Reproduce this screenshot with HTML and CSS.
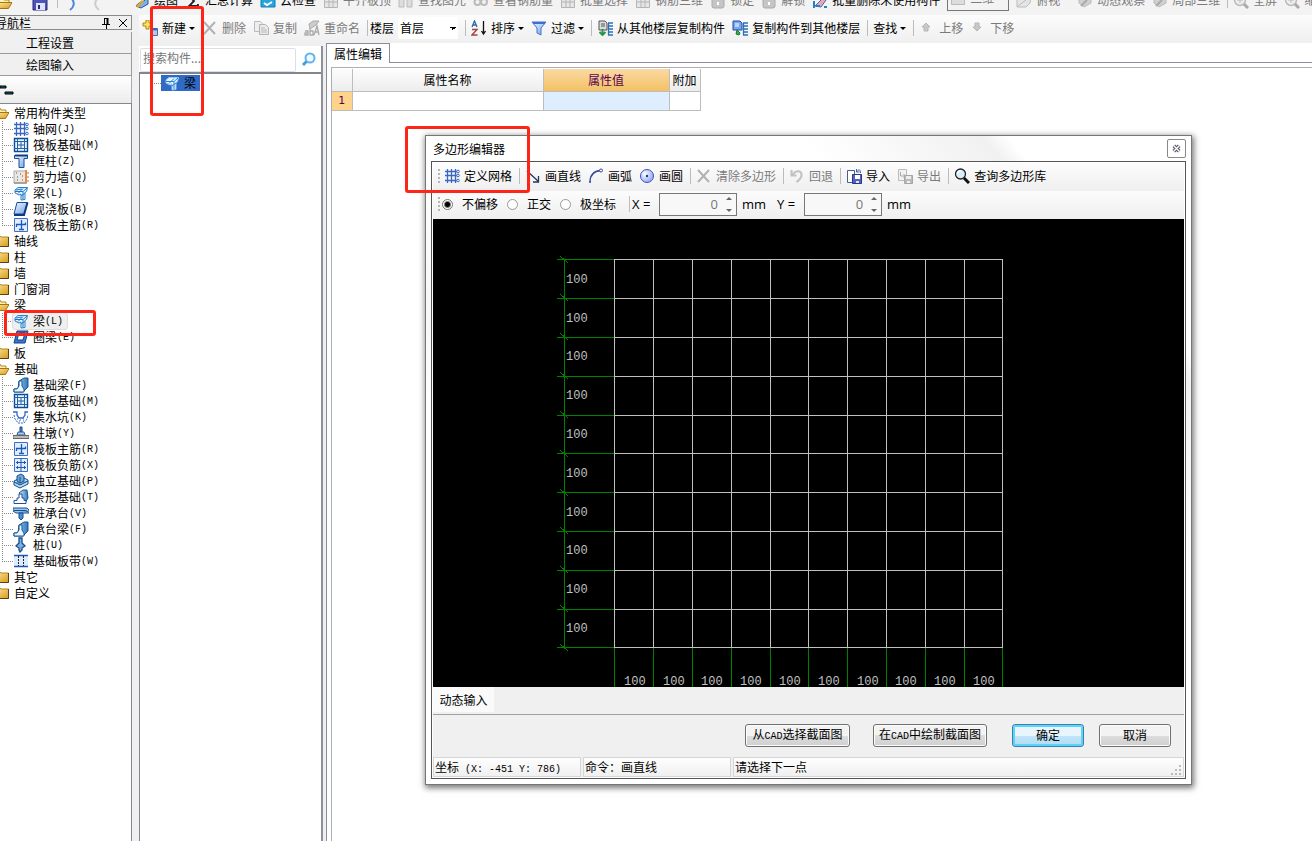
FILE: index.html
```html
<!DOCTYPE html>
<html lang="zh-CN">
<head>
<meta charset="utf-8">
<title>多边形编辑器</title>
<link rel="stylesheet" href="styles.css">
</head>
<body>
<svg class="defs" aria-hidden="true">
  <defs>
    <linearGradient id="gold" x1="0" y1="0" x2="1" y2="1"><stop offset="0" stop-color="#ffe9a0"/><stop offset="1" stop-color="#d59b1c"/></linearGradient>
    <linearGradient id="blue" x1="0" y1="0" x2="1" y2="1"><stop offset="0" stop-color="#f2f8ff"/><stop offset="1" stop-color="#6f9fe8"/></linearGradient>
    <linearGradient id="steel" x1="0" y1="0" x2="1" y2="0"><stop offset="0" stop-color="#d8ecfb"/><stop offset="1" stop-color="#2d77bd"/></linearGradient>
    <radialGradient id="ball" cx=".35" cy=".35" r=".8"><stop offset="0" stop-color="#fff"/><stop offset="1" stop-color="#7f9bf5"/></radialGradient>
  </defs>
  <symbol id="folder" viewBox="0 0 16 16"><path d="M1 3h6l1 1h7.500v9.500H1z" fill="url(#gold)" stroke="#b8841c"/><path d="M1 13.500h14.500V4" fill="none" stroke="#5d4210"/></symbol>
  <symbol id="open" viewBox="0 0 16 16"><path d="M1 3h6l1 2h5v3H1z" fill="#fff0b5" stroke="#b98518"/><path d="M1 13.500L4 7.500h12l-3.500 6z" fill="url(#gold)" stroke="#a87410"/></symbol>
  <symbol id="grid" viewBox="0 0 16 16"><path d="M3.500 1v14M7.500 1v14M11.500 1v14M1 3.500h12M1 7.500h12M1 12.500h12" stroke="#3a68c0" stroke-width="1.300"/><g fill="#fff" stroke="#3a68c0"><circle cx="14" cy="3.500" r="1.300"/><circle cx="14" cy="7.500" r="1.300"/><circle cx="14" cy="12.500" r="1.300"/></g></symbol>
  <symbol id="raft" viewBox="0 0 16 16"><path d="M1.500 1.500h13v13h-13z" fill="#eaf3ff" stroke="#0d4c91" stroke-width="1.400"/><path d="M4.500 1v13M11.500 1v13M1 4.500h13M1 11.500h13M8 5v6M5 8h6" stroke="#1e62aa"/></symbol>
  <symbol id="column" viewBox="0 0 16 16"><path d="M1.500 2.500h13v3h-3.500V14.500H6V5.500H1.500z" fill="url(#blue)" stroke="#174c9c"/><path d="M2 2.500h13" stroke="#123c80" stroke-width="2"/></symbol>
  <symbol id="wall" viewBox="0 0 16 16"><path d="M1 2h12v12H1z" fill="#ece7e2" stroke="#aaa"/><path d="M1 14h13" stroke="#777"/><path d="M3 4h1m3 1h1m-4 3h1m4-1h1m-6 4h1m4 0h1m2-6h1m0 5h1" stroke="#555"/><path d="M13 1v13" stroke="#e6894a" stroke-width="2"/><path d="M14 4h2M14 8h2M14 12h2" stroke="#d06d29"/></symbol>
  <symbol id="beam" viewBox="0 0 16 16"><path d="M2 5l3-2.500h9.500l-1 4-1.500 1v7l-4 .5V9L6 10 2 8z" fill="#e4f3ff" stroke="#2484cf"/><path d="M2 6.500h8l4-3.500M5 8.500l5-5M10 7v7.500M8 11l4-3M3 5l6-1" fill="none" stroke="#1f78c4"/></symbol>
  <symbol id="slab" viewBox="0 0 16 16"><path d="M4 1.500h10.500L11 13H1z" fill="url(#blue)" stroke="#174c9c"/><path d="M1 14h10l3.500-12.500" fill="none" stroke="#0e3a80" stroke-width="2"/></symbol>
  <symbol id="rebar" viewBox="0 0 16 16"><path d="M1.500 1.500h13v13h-13z" fill="#e2eeff" stroke="#3b6fca"/><path d="M8.500 3v10M3.500 10V7.500h9V5.500M6 12.500h5" fill="none" stroke="#1f57b4" stroke-width="1.300"/></symbol>
  <symbol id="negbar" viewBox="0 0 16 16"><path d="M1.500 1.500h13v13h-13z" fill="#e2eeff" stroke="#3b6fca"/><path d="M8 1v13M3 5.500h10M3 10.500h10M4.500 4v3m7-3v3M4.500 9v3m7-3v3" stroke="#1f57b4"/></symbol>
  <symbol id="ring" viewBox="0 0 16 16"><path d="M4 2h11l-3 12H1z" fill="#3b79cf" stroke="#123f85"/><path d="M6 4h6l-2 7H4z" fill="#fff" stroke="#123f85"/></symbol>
  <symbol id="fbeam" viewBox="0 0 16 16"><path d="M6 4l5-3h4v9l-5 5H1v-3h4z" fill="url(#steel)" stroke="#17568f"/><path d="M1 12h3l2-3V4h3v5l2 3v3H1z" fill="#e8f4ff" stroke="#17568f"/></symbol>
  <symbol id="strip" viewBox="0 0 16 16"><path d="M6 4l4-3h4l1 8-3 5z" fill="url(#steel)" stroke="#17568f"/><path d="M1 14.500v-3h3V9h2V5h3v4h2v2.500h2v3z" fill="#fff" stroke="#1f4f9f"/></symbol>
  <symbol id="pit" viewBox="0 0 16 16"><path d="M0 3h4v3l2 3h4l2-3V3h3" fill="none" stroke="#2f69c8" stroke-width="1.300"/><path d="M1 6l1 4 3 4h6l3-4 1-4" fill="none" stroke="#2f69c8" stroke-dasharray="2 1"/><path d="M4 10h1m2 1h1m2-1h1m-5 2h1m3 0h1" stroke="#2f69c8"/></symbol>
  <symbol id="pier" viewBox="0 0 16 16"><path d="M7 2h2v5H7z" fill="#5b90d8" stroke="#173f80"/><path d="M5 7h6l1 3H4z" fill="#a9c9ee" stroke="#315f9f"/><path d="M0 10.500h16v3H0z" fill="#bbb" stroke="#666"/></symbol>
  <symbol id="iso" viewBox="0 0 16 16"><path d="M1 8l8-4 6 3v4l-8 4-6-3z" fill="#b9dbf5" stroke="#154d8a"/><path d="M4 3l4-2 3 2v5l-4 2-3-2zM7 4v6M1 9l6 3 8-4" fill="#6fa9da" stroke="#154d8a"/></symbol>
  <symbol id="cap" viewBox="0 0 16 16"><path d="M0 3h14l2 2v3H3L0 6z" fill="#9cc8f0" stroke="#164f90"/><path d="M1 5.500h12l2 1.500M6 8v5l2 2 2-2V8z" fill="#4c8dd0" stroke="#164f90"/></symbol>
  <symbol id="pile" viewBox="0 0 16 16"><path d="M6 1h3v5l3 3-3 2v2l-2 2-1-2v-2L3 9l3-3z" fill="#79aee5" stroke="#1b4c8c" stroke-width="1.300"/></symbol>
  <symbol id="band" viewBox="0 0 16 16"><path d="M1 3h14v10H1z" fill="#dcecff"/><path d="M1 2.500h14M1 13.500h14" stroke="#1f57b4" stroke-width="1.500"/><path d="M5.500 3v10M10.500 3v10" stroke="#222" stroke-dasharray="2 1"/></symbol>
  <symbol id="new" viewBox="0 0 16 16"><path d="M4 0h3v3h3v3H7v3H4V6H1V3h3z" fill="#ffe45a" stroke="#aa8610"/><path d="M9.500 8.500h6v7h-6z" fill="#dceaff" stroke="#4b6ea8"/><path d="M10 9.500h5" stroke="#2c65c9" stroke-width="2"/><path d="M11 12h4m-4 2h4" stroke="#89a7d4"/></symbol>
  <symbol id="cross" viewBox="0 0 16 16"><path d="M2 2l11 12M13 2L2 14" stroke="#b2b2b2" stroke-width="2"/></symbol>
  <symbol id="copy" viewBox="0 0 16 16"><path d="M1.500 1.500h6l2 2v8h-8z" fill="#eee" stroke="#bbb"/><path d="M6.500 4.500h6l3 3v7h-9z" fill="#e9e9e9" stroke="#b3b3b3"/><path d="M8 8h4m-4 2h6m-6 2h6" stroke="#bbb"/></symbol>
  <symbol id="rename" viewBox="0 0 16 16"><path d="M5 4l4-3h6l-3 4-6 4z" fill="#ccc" stroke="#aaa"/><path d="M1 11h3v4H1v-2h3M6 9v6h3v-4H6M10 15l3-9 2 9m-4-3h4" fill="none" stroke="#aaa" stroke-width="1.300"/></symbol>
  <symbol id="sort" viewBox="0 0 16 16"><path d="M1 7l2.500-6L6 7M2 5h3" fill="none" stroke="#2d66a5" stroke-width="1.300"/><path d="M1 9.500h5L1 15h5.500" fill="none" stroke="#a04343" stroke-width="1.400"/><path d="M12.500 1v13M10.500 11l2 3 2-3" fill="none" stroke="#111" stroke-width="1.300"/></symbol>
  <symbol id="filter" viewBox="0 0 16 16"><path d="M1 2h14l-5 6v7l-4-2V8z" fill="url(#blue)" stroke="#3f74d0"/><path d="M2 3h12" stroke="#3f6fd4" stroke-width="2"/></symbol>
  <symbol id="fromfloor" viewBox="0 0 16 16"><path d="M2 1h6l2 2v7H2z" fill="#ddd" stroke="#555"/><path d="M4 4h4M4 6h4" stroke="#555"/><path d="M5.500 9v5m-3-2l3 3 3-3" fill="none" stroke="#28974b" stroke-width="2"/><path d="M11 3h5M11 6h5M11 9h5M11 12h5M11 15h5M11.500 3v12" fill="none" stroke="#2c70b5" stroke-width="1.300"/></symbol>
  <symbol id="tofloor" viewBox="0 0 16 16"><path d="M1 1h7l2 2v7H1z" fill="#79a5ee" stroke="#2448a5"/><path d="M3 4h4M3 6h4" stroke="#fff"/><path d="M4 14l1-4 3 3-1 2z" fill="#31b54c" stroke="#167432"/><path d="M11 3h5M11 6h5M11 9h5M11 12h5M11 15h5M11.500 3v12" fill="none" stroke="#2c70b5" stroke-width="1.300"/></symbol>
  <symbol id="up" viewBox="0 0 16 16"><path d="M7 3l4 4H9v4H5V7H3z" fill="#c8c8c8" stroke="#b5b5b5"/></symbol>
  <symbol id="down" viewBox="0 0 16 16"><path d="M5 3h4v4h2l-4 4-4-4h2z" fill="#c8c8c8" stroke="#b5b5b5"/></symbol>
  <symbol id="glass" viewBox="0 0 16 16"><circle cx="9" cy="6" r="4.500" fill="#eef8ff" stroke="#62b4e8" stroke-width="2"/><path d="M5.500 9.500L2 13" stroke="#4a9bd6" stroke-width="3"/></symbol>
  <symbol id="line" viewBox="0 0 16 16"><path d="M2 3l11 10M13.500 8v6H8" fill="none" stroke="#24365e" stroke-width="1.300"/></symbol>
  <symbol id="arc" viewBox="0 0 16 16"><path d="M2 14C2 7 6 3 13 2.500" fill="none" stroke="#3a459c" stroke-width="1.300"/><circle cx="13" cy="2.500" r="1.500" fill="#fff" stroke="#3a459c"/><circle cx="2" cy="14" r="1" fill="#3a459c"/></symbol>
  <symbol id="circle" viewBox="0 0 16 16"><circle cx="8" cy="8" r="6.500" fill="url(#ball)" stroke="#3d55bf"/><circle cx="8" cy="8" r="1.200" fill="#26388e"/></symbol>
  <symbol id="undo" viewBox="0 0 16 16"><path d="M2.500 2v5.500h5M3.500 7c3-5 9-5 9 0 0 3-2 5-5 7" fill="none" stroke="#c3c3c3" stroke-width="2.200"/></symbol>
  <symbol id="import" viewBox="0 0 16 16"><path d="M1.500 2.500h7v12h-7z" fill="#fff" stroke="#4a5d96"/><path d="M6.500 6.500h9v9h-9z" fill="#5261c4" stroke="#29357f"/><path d="M9 7h5v4H9z" fill="#fff"/><path d="M10 13h3v2h-3z" fill="#dfe3f8"/><path d="M10.500 4c2-3 4-3 4 1m-4-4v3h3" fill="none" stroke="#3f65a8"/></symbol>
  <symbol id="export" viewBox="0 0 16 16"><path d="M1.500 1.500h8v11h-8z" fill="#f2f2f2" stroke="#bbb"/><path d="M7.500 7.500h8v8h-8z" fill="#bbb" stroke="#a5a5a5"/><path d="M9 8h5v3H9zM10 13h3v2h-3z" fill="#eee"/><path d="M3.500 4v4h5M6.500 6l2 2-2 2" fill="none" stroke="#aaa"/></symbol>
  <symbol id="query" viewBox="0 0 16 16"><circle cx="6.500" cy="6" r="5" fill="#d7effc" stroke="#222" stroke-width="1.300"/><path d="M10 10l5 5" stroke="#111" stroke-width="3"/><path d="M3.500 6c0-2 1-3 3-3" fill="none" stroke="#fff" stroke-width="1.500"/></symbol>
  <symbol id="save" viewBox="0 0 16 16"><path d="M1 1h14v14H1z" fill="#4b55ba" stroke="#262c78"/><path d="M4 8h9v7H4z" fill="#dfe2f4"/><path d="M6 10h2v4H6z" fill="#262c78"/></symbol>
  <symbol id="draw" viewBox="0 0 16 16"><path d="M2 13c4-6 8-2 12-10v8l-7 4z" fill="#78b3e6" stroke="#30539b"/><path d="M3 14l6-6" stroke="#d3a640" stroke-width="3"/></symbol>
  <symbol id="sum" viewBox="0 0 16 16"><path d="M13 3H4l5 5-5 5h9v-2" fill="none" stroke="#222" stroke-width="1.800"/></symbol>
  <symbol id="cloud" viewBox="0 0 16 16"><path d="M1 2h14v12H1z" fill="#26a4dc" stroke="#127fb2"/><path d="M4 10l3 2 5-3" stroke="#fff" fill="none" stroke-width="2"/></symbol>
  <symbol id="sheet" viewBox="0 0 16 16"><path d="M1.500 2.500h13v12h-13zM6 2v12m4-12v12M1 9h13" fill="#e6e6e6" stroke="#b5b5b5"/></symbol>
  <symbol id="bins" viewBox="0 0 16 16"><path d="M1 5h5v9H1zM9 5h5v9H9z" fill="#ddd" stroke="#bbb"/></symbol>
  <symbol id="loops" viewBox="0 0 16 16"><circle cx="4.500" cy="9" r="3" fill="none" stroke="#bbb" stroke-width="2"/><circle cx="11" cy="9" r="3" fill="none" stroke="#bbb" stroke-width="2"/></symbol>
  <symbol id="lock" viewBox="0 0 16 16"><rect x="2" y="5" width="12" height="10" rx="2" fill="#c5c5c5" stroke="#aaa"/><path d="M8 9v3" stroke="#fff" stroke-width="2"/></symbol>
  <symbol id="plane" viewBox="0 0 16 16"><path d="M1.500 3.500h13v10h-13z" fill="#ddd" stroke="#bbb"/></symbol>
  <symbol id="purge" viewBox="0 0 16 16"><path d="M3 13l8-8 3 2-5 7z" fill="#f1a3b4" stroke="#2977b2"/><path d="M2 8v7m2-2h4m4 1h3" stroke="#2d7bc4" stroke-width="2"/></symbol>
  <symbol id="box" viewBox="0 0 16 16"><path d="M1 7l4-4h10l-1 7-4 4H1z" fill="#e5e5e5" stroke="#bbb"/><path d="M2 13l12-9" stroke="#bbb"/></symbol>
  <symbol id="orbit" viewBox="0 0 16 16"><path d="M2 5h12v5l-7 4-5-4z" fill="#d0d0d0" stroke="#bbb"/><path d="M4 13l6-6" stroke="#aaa" stroke-width="2"/></symbol>
  <symbol id="zoom" viewBox="0 0 16 16"><circle cx="7" cy="7" r="5.500" fill="#eee" stroke="#bbb" stroke-width="1.500"/><path d="M11 11l4 4" stroke="#aaa" stroke-width="3"/><path d="M7 4v6M4 7h6" stroke="#bbb"/></symbol>
</svg>

<div class="topbar">
  <div class="file-tools">
    <svg class="icon file-open"><use href="#open"/></svg>
    <svg class="icon"><use href="#save"/></svg>
    <i class="sep"></i>
    <svg class="icon" viewBox="0 0 16 16"><path d="M5 15c4-3 5-7 2-11" fill="none" stroke="#4f86d8" stroke-width="2"/></svg>
    <svg class="icon" viewBox="0 0 16 16"><path d="M9 15C5 12 4 8 7 4" fill="none" stroke="#ccc" stroke-width="2"/></svg>
  </div>
  <button class="tool"><svg class="icon"><use href="#draw"/></svg>绘图</button>
  <button class="tool"><svg class="icon"><use href="#sum"/></svg>汇总计算</button>
  <button class="tool"><svg class="icon"><use href="#cloud"/></svg>云检查</button>
  <button class="tool off"><svg class="icon"><use href="#sheet"/></svg>平齐板顶</button>
  <button class="tool off"><svg class="icon"><use href="#bins"/></svg>查找图元</button>
  <button class="tool off"><svg class="icon"><use href="#loops"/></svg>查看钢筋量</button>
  <button class="tool off"><svg class="icon"><use href="#sheet"/></svg>批量选择</button>
  <button class="tool off"><svg class="icon"><use href="#sheet"/></svg>钢筋三维</button>
  <button class="tool off"><svg class="icon"><use href="#lock"/></svg>锁定</button>
  <button class="tool off"><svg class="icon"><use href="#lock"/></svg>解锁</button>
  <button class="tool"><svg class="icon"><use href="#purge"/></svg>批量删除未使用构件</button>
  <button class="tool off view-mode"><svg class="icon"><use href="#plane"/></svg>二维</button>
  <button class="tool off spaced"><svg class="icon"><use href="#box"/></svg>俯视</button>
  <button class="tool off"><svg class="icon"><use href="#orbit"/></svg>动态观察</button>
  <button class="tool off"><svg class="icon"><use href="#orbit"/></svg>局部三维</button>
  <i class="sep"></i>
  <button class="tool off"><svg class="icon"><use href="#zoom"/></svg>全屏</button>
  <button class="tool off"><svg class="icon"><use href="#zoom"/></svg>缩放</button>
</div>

<div class="workspace">
  <aside class="nav">
    <div class="nav-title"><span>导航栏</span>
      <svg class="pin" viewBox="0 0 10 12"><path d="M3.500 1v6M3 1.500h4M1 7.500h8M5.500 8v4" fill="none" stroke="#000"/><path d="M6.500 1v6" stroke="#000" stroke-width="2"/></svg>
      <svg class="pin" viewBox="0 0 10 12"><path d="M1 2l8 8M9 2l-8 8" stroke="#000"/></svg>
    </div>
    <button class="nav-button">工程设置</button>
    <button class="nav-button">绘图输入</button>
    <div class="nav-tools"><svg class="levels" viewBox="0 0 14 10"><path d="M0 1h6v2H0zM5 7h8v2H5z" fill="#0d6670" stroke="#000"/></svg></div>
    <ul class="tree">
      <li class="root"><svg class="icon"><use href="#open"/></svg>常用构件类型</li>
      <li class="leaf"><svg class="icon"><use href="#grid"/></svg>轴网<span class="mono">(J)</span></li>
      <li class="leaf"><svg class="icon"><use href="#raft"/></svg>筏板基础<span class="mono">(M)</span></li>
      <li class="leaf"><svg class="icon"><use href="#column"/></svg>框柱<span class="mono">(Z)</span></li>
      <li class="leaf"><svg class="icon"><use href="#wall"/></svg>剪力墙<span class="mono">(Q)</span></li>
      <li class="leaf"><svg class="icon"><use href="#beam"/></svg>梁<span class="mono">(L)</span></li>
      <li class="leaf"><svg class="icon"><use href="#slab"/></svg>现浇板<span class="mono">(B)</span></li>
      <li class="leaf last"><svg class="icon"><use href="#rebar"/></svg>筏板主筋<span class="mono">(R)</span></li>
      <li class="root"><svg class="icon"><use href="#folder"/></svg>轴线</li>
      <li class="root"><svg class="icon"><use href="#folder"/></svg>柱</li>
      <li class="root"><svg class="icon"><use href="#folder"/></svg>墙</li>
      <li class="root"><svg class="icon"><use href="#folder"/></svg>门窗洞</li>
      <li class="root"><svg class="icon"><use href="#open"/></svg>梁</li>
      <li class="leaf"><span class="current"><svg class="icon"><use href="#beam"/></svg>梁<span class="mono">(L)</span></span></li>
      <li class="leaf last"><svg class="icon"><use href="#ring"/></svg>圈梁<span class="mono">(E)</span></li>
      <li class="root"><svg class="icon"><use href="#folder"/></svg>板</li>
      <li class="root"><svg class="icon"><use href="#open"/></svg>基础</li>
      <li class="leaf"><svg class="icon"><use href="#fbeam"/></svg>基础梁<span class="mono">(F)</span></li>
      <li class="leaf"><svg class="icon"><use href="#raft"/></svg>筏板基础<span class="mono">(M)</span></li>
      <li class="leaf"><svg class="icon"><use href="#pit"/></svg>集水坑<span class="mono">(K)</span></li>
      <li class="leaf"><svg class="icon"><use href="#pier"/></svg>柱墩<span class="mono">(Y)</span></li>
      <li class="leaf"><svg class="icon"><use href="#rebar"/></svg>筏板主筋<span class="mono">(R)</span></li>
      <li class="leaf"><svg class="icon"><use href="#negbar"/></svg>筏板负筋<span class="mono">(X)</span></li>
      <li class="leaf"><svg class="icon"><use href="#iso"/></svg>独立基础<span class="mono">(P)</span></li>
      <li class="leaf"><svg class="icon"><use href="#strip"/></svg>条形基础<span class="mono">(T)</span></li>
      <li class="leaf"><svg class="icon"><use href="#cap"/></svg>桩承台<span class="mono">(V)</span></li>
      <li class="leaf"><svg class="icon"><use href="#fbeam"/></svg>承台梁<span class="mono">(F)</span></li>
      <li class="leaf"><svg class="icon"><use href="#pile"/></svg>桩<span class="mono">(U)</span></li>
      <li class="leaf last"><svg class="icon"><use href="#band"/></svg>基础板带<span class="mono">(W)</span></li>
      <li class="root"><svg class="icon"><use href="#folder"/></svg>其它</li>
      <li class="root"><svg class="icon"><use href="#folder"/></svg>自定义</li>
    </ul>
  </aside>

  <main class="main">
    <div class="toolbar">
      <button class="tool"><svg class="icon"><use href="#new"/></svg>新建<i class="caret"></i></button>
      <button class="tool off"><svg class="icon"><use href="#cross"/></svg>删除</button>
      <button class="tool off"><svg class="icon"><use href="#copy"/></svg>复制</button>
      <button class="tool off"><svg class="icon"><use href="#rename"/></svg>重命名</button>
      <i class="sep"></i>
      <label class="floor">楼层
        <select><option>首层</option></select>
      </label>
      <i class="sep"></i>
      <button class="tool"><svg class="icon"><use href="#sort"/></svg>排序<i class="caret"></i></button>
      <button class="tool"><svg class="icon"><use href="#filter"/></svg>过滤<i class="caret"></i></button>
      <i class="sep"></i>
      <button class="tool"><svg class="icon"><use href="#fromfloor"/></svg>从其他楼层复制构件</button>
      <button class="tool"><svg class="icon"><use href="#tofloor"/></svg>复制构件到其他楼层</button>
      <i class="sep"></i>
      <button class="tool">查找<i class="caret"></i></button>
      <i class="sep"></i>
      <button class="tool off"><svg class="icon"><use href="#up"/></svg>上移</button>
      <button class="tool off"><svg class="icon"><use href="#down"/></svg>下移</button>
    </div>
    <div class="panes">
      <section class="parts">
        <div class="search"><input type="text" placeholder="搜索构件..." aria-label="搜索构件"><svg class="icon"><use href="#glass"/></svg></div>
        <ul class="part-list"><li><span class="selected"><svg class="icon" viewBox="0 0 16 16"><path d="M2 5l3-2.500h9.500l-1 4-1.500 1v7l-4 .5V9L6 10 2 8z" fill="#e4f3ff" stroke="#8fc8f5"/><path d="M2 6.500h8l4-3.500M5 8.500l5-5M10 7v7.500M8 11l4-3" fill="none" stroke="#2484cf"/></svg>梁</span></li></ul>
      </section>
      <section class="props">
        <div class="tabs"><button class="tab">属性编辑</button></div>
        <div class="sheet">
          <table>
            <thead><tr><th class="c-num"></th><th class="c-name">属性名称</th><th class="c-value">属性值</th><th class="c-extra">附加</th></tr></thead>
            <tbody><tr><td class="row-num">1</td><td></td><td class="active"></td><td></td></tr></tbody>
          </table>
        </div>
      </section>
    </div>
  </main>
</div>

<div class="dialog" role="dialog" aria-labelledby="dialog-title">
  <div class="dialog-title"><span id="dialog-title">多边形编辑器</span>
    <button class="close" aria-label="关闭"><svg viewBox="0 0 10 10"><path d="M2 2l6 6M8 2L2 8" stroke="#555566" stroke-width="4"/><path d="M2 2l6 6M8 2L2 8" stroke="#fff" stroke-width="1.500"/></svg></button>
  </div>
  <div class="dialog-body">
    <div class="toolbar draw-bar">
      <i class="grip"></i>
      <button class="tool"><svg class="icon"><use href="#grid"/></svg>定义网格</button>
      <i class="sep"></i>
      <button class="tool"><svg class="icon"><use href="#line"/></svg>画直线</button>
      <button class="tool"><svg class="icon"><use href="#arc"/></svg>画弧</button>
      <button class="tool"><svg class="icon"><use href="#circle"/></svg>画圆</button>
      <i class="sep"></i>
      <button class="tool off"><svg class="icon"><use href="#cross"/></svg>清除多边形</button>
      <i class="sep"></i>
      <button class="tool off"><svg class="icon"><use href="#undo"/></svg>回退</button>
      <i class="sep"></i>
      <button class="tool"><svg class="icon"><use href="#import"/></svg>导入</button>
      <button class="tool off"><svg class="icon"><use href="#export"/></svg>导出</button>
      <i class="sep"></i>
      <button class="tool"><svg class="icon"><use href="#query"/></svg>查询多边形库</button>
    </div>
    <div class="toolbar offset-bar">
      <i class="grip"></i>
      <div class="modes">
        <label><input type="radio" name="mode" checked>不偏移</label>
        <label><input type="radio" name="mode">正交</label>
        <label><input type="radio" name="mode">极坐标</label>
      </div>
      <i class="sep"></i>
      <div class="coord"><label for="dx">X =</label><span class="spin"><input id="dx" type="text" value="0"><span class="arrows"><i class="inc"></i><i class="dec"></i></span></span><span>mm</span></div>
      <div class="coord"><label for="dy">Y =</label><span class="spin"><input id="dy" type="text" value="0"><span class="arrows"><i class="inc"></i><i class="dec"></i></span></span><span>mm</span></div>
    </div>
    <div class="canvas">
      <svg width="751" height="468" shape-rendering="crispEdges">
        <path class="dim" d="M131.500 40v389M124 40.500h57M124 79.500h57M124 118.500h57M124 157.500h57M124 196.500h57M124 234.500h57M124 273.500h57M124 312.500h57M124 351.500h57M124 390.500h57M124 428.500h57"/>
        <path class="tick" d="M127 37l8 7M127 75l8 7M127 114l8 7M127 153l8 7M127 192l8 7M127 231l8 7M127 270l8 7M127 308l8 7M127 347l8 7M127 386l8 7M127 425l8 7"/>
        <path class="dim" d="M181.500 429v39M220.500 429v39M259.500 429v39M298.500 429v39M337.500 429v39M375.500 429v39M414.500 429v39M453.500 429v39M492.500 429v39M531.500 429v39M569.500 429v39"/>
        <path class="net" d="M181 40.500h389M181 79.500h389M181 118.500h389M181 157.500h389M181 196.500h389M181 234.500h389M181 273.500h389M181 312.500h389M181 351.500h389M181 390.500h389M181 428.500h389M181.500 40v389M220.500 40v389M259.500 40v389M298.500 40v389M337.500 40v389M375.500 40v389M414.500 40v389M453.500 40v389M492.500 40v389M531.500 40v389M569.500 40v389"/>
        <g class="size">
          <text x="133" y="64">100</text><text x="133" y="103">100</text><text x="133" y="141">100</text><text x="133" y="180">100</text><text x="133" y="219">100</text><text x="133" y="258">100</text><text x="133" y="297">100</text><text x="133" y="335">100</text><text x="133" y="374">100</text><text x="133" y="413">100</text>
          <text x="191" y="466">100</text><text x="230" y="466">100</text><text x="268" y="466">100</text><text x="307" y="466">100</text><text x="346" y="466">100</text><text x="385" y="466">100</text><text x="424" y="466">100</text><text x="462" y="466">100</text><text x="501" y="466">100</text><text x="540" y="466">100</text>
        </g>
      </svg>
    </div>
    <div class="dynamic"><button>动态输入</button></div>
    <div class="actions">
      <button class="push from-cad">从<span class="mono">CAD</span>选择截面图</button>
      <button class="push in-cad">在<span class="mono">CAD</span>中绘制截面图</button>
      <button class="push main-action">确定</button>
      <button class="push">取消</button>
    </div>
    <div class="status">
      <span>坐标<span class="mono pre"> (X: -451 Y: 786)</span></span>
      <span>命令：画直线</span>
      <span class="hint">请选择下一点<svg class="size-grip" viewBox="0 0 12 12"><path d="M9 1h2v2H9zM5 5h2v2H5zM9 5h2v2H9zM1 9h2v2H1zM5 9h2v2H5zM9 9h2v2H9z" fill="#bbb"/></svg></span>
    </div>
  </div>
</div>

<div class="mark mark-new"></div>
<div class="mark mark-beam"></div>
<div class="mark mark-grid"></div>
</body>
</html>
```
FILE: styles.css
```css
* { box-sizing: border-box; }
body {
  margin: 0;
  height: 100vh;
  display: flex;
  flex-direction: column;
  overflow: hidden;
  position: relative;
  background: #f0f0f0;
  color: #000;
  font: 12px/16px "Noto Sans CJK SC", sans-serif;
}
button, input, select { font: inherit; color: inherit; margin: 0; padding: 0; border: 0; background: none; }
ul { list-style: none; margin: 0; padding: 0; }
.defs { position: absolute; width: 0; height: 0; }
.icon { width: 16px; height: 16px; flex: none; }
.mono { font-family: "Liberation Mono", monospace; font-size: 10px; }
.pre { white-space: pre; }

/* Toolbars */
.topbar {
  height: 15px;
  flex: none;
  display: flex;
  align-items: flex-end;
  gap: 7px;
  padding-bottom: 7px;
  overflow: hidden;
  background: #f3f3f3;
}
.file-tools { width: 127px; flex: none; display: flex; align-items: flex-end; gap: 9px; }
.topbar .icon { margin-bottom: -1px; }
.file-tools .icon { margin-bottom: -3px; }
.file-open { margin: 0 11px 0 -4px; }
.toolbar {
  height: 28px;
  flex: none;
  display: flex;
  align-items: center;
  gap: 7px;
  padding-bottom: 2px;
  background: linear-gradient(#fcfcfc, #efefef);
}
.tool { display: flex; align-items: center; gap: 4px; flex: none; white-space: nowrap; }
.off { color: #7b7b7b; }
.sep { width: 1px; height: 16px; flex: none; margin-right: -2px; background: #bcbcbc; }
.caret { border: 3px solid transparent; border-top-color: #000; border-bottom: 0; margin-left: -1px; }
.view-mode { width: 62px; height: 24px; padding-left: 2px; padding-bottom: 2px; margin-bottom: -3px; border: 1px solid #777; }
.spaced { margin-right: 10px; }

/* Navigation */
.workspace { flex: 1; min-height: 0; display: flex; gap: 7px; }
.nav { width: 132px; flex: none; display: flex; flex-direction: column; }
.nav-title {
  height: 15px;
  display: flex;
  align-items: center;
  gap: 7px;
  margin-bottom: 2px;
  padding-right: 3px;
  border: 1px solid #8a8a8a;
  border-left: 0;
}
.nav-title span { flex: 1; margin-left: -5px; }
.pin { width: 10px; height: 12px; }
.nav-button { height: 22px; padding-right: 31px; border-bottom: 1px solid #9b9b9b; border-right: 1px solid #9b9b9b; background: #f0f0f0; }
.nav-tools { height: 27px; padding-top: 9px; background: linear-gradient(#fff, #ececec); border-right: 1px solid #aaa; }
.levels { display: block; width: 14px; height: 10px; }
.tree { flex: 1; padding-top: 1px; background: #fff; border-top: 1px solid #828790; border-right: 1px solid #828790; }
.tree li { height: 16px; display: flex; align-items: center; white-space: nowrap; }
.tree .mono { padding-top: 1px; }
.root .icon { margin: 0 5px 0 -7px; }
.leaf { padding-left: 2px; }
.leaf::before {
  content: "";
  width: 11px;
  height: 16px;
  flex: none;
  background:
    repeating-linear-gradient(90deg, #888 0 1px, transparent 1px 2px) 0 8px / 11px 1px no-repeat,
    repeating-linear-gradient(#888 0 1px, transparent 1px 2px) 0 0 / 1px 16px no-repeat;
}
.leaf.last::before { background-size: 11px 1px, 1px 8px; }
.leaf .icon { margin-right: 4px; }
.current { display: flex; align-items: center; height: 16px; padding-right: 4px; border-radius: 3px; background: #efefef; box-shadow: 0 0 0 1px #ddd; }

/* Work area */
.main { flex: 1; min-width: 0; display: flex; flex-direction: column; }
.main > .toolbar { padding-left: 3px; }
.floor { display: flex; align-items: center; gap: 4px; margin-left: -3px; }
.floor select {
  width: 60px;
  height: 22px;
  padding-left: 2px;
  appearance: none;
  background-color: #fff;
  background-image: linear-gradient(135deg, #000 50%, transparent 50%), linear-gradient(225deg, #000 50%, transparent 50%);
  background-size: 3px 3px;
  background-position: 55px 10px, 52px 10px;
  background-repeat: no-repeat;
}
.panes { flex: 1; display: flex; gap: 3px; min-height: 0; }
.parts { width: 184px; flex: none; display: flex; flex-direction: column; margin-top: 3px; border-right: 2px solid #8e919b; }
.search { height: 26px; display: flex; align-items: center; gap: 5px; padding: 1px 4px 0 1px; background: #fff; }
.search input { width: 157px; height: 24px; padding: 0 2px 4px; border: 1px solid #dcdfe6; border-radius: 2px; background: #fff; }
.search input::placeholder { color: #777; opacity: 1; }
.part-list { flex: 1; padding: 1px 0 0 14px; background: #fff; border-top: 2px solid #82858e; border-left: 1px solid #82858e; }
.part-list li { display: flex; align-items: center; }
.part-list li::before { content: ""; width: 7px; height: 1px; background: repeating-linear-gradient(90deg, #888 0 1px, transparent 1px 2px); }
.selected { display: flex; align-items: center; gap: 4px; padding: 0 4px 0 3px; background: #316ac5; }
.props { flex: 1; min-width: 0; display: flex; flex-direction: column; background: #fff; border-left: 1px solid #8b8c9c; }
.tabs { height: 20px; display: flex; }
.tabs::after { content: ""; flex: 1; border-bottom: 1px solid #8b8c9c; }
.tab { width: 63px; border: 1px solid #8b8c9c; border-bottom: 0; border-left: 0; }
.sheet { flex: 1; border: 1px solid #aeaeb2; border-right: 0; border-bottom: 0; margin: 4px 0 0 4px; padding-top: 1px; }
table { border-collapse: collapse; }
th { height: 22px; padding: 0; font-weight: normal; background: linear-gradient(#fdfdfd, #ededed); }
td { height: 19px; padding: 0; line-height: 14px; }
th, td { border-right: 1px solid #bdbdbd; border-bottom: 1px solid #bdbdbd; }
.c-num { width: 20px; }
.c-name { width: 191px; }
.c-value { width: 126px; background: linear-gradient(#f9d9a2, #f3c163); color: #5a0057; }
.c-extra { width: 31px; }
.row-num { background: #ffd48a; color: #5a0057; text-align: center; font-family: "DejaVu Sans", sans-serif; font-size: 11px; }
.active { background: #deeeff; }

/* Polygon editor window */
.dialog {
  position: absolute;
  left: 425px;
  top: 135px;
  width: 767px;
  padding: 0 5px 5px;
  border: 1px solid #767676;
  background: linear-gradient(50deg, #fff 0 24%, #f7f7f7 30%, #fff 42% 70%, #f1f1f1 84%, #fff 86%);
  box-shadow: 1px 2px 6px 1px #0008;
}
.dialog-title { height: 25px; display: flex; align-items: center; justify-content: space-between; padding-left: 2px; }
.close { width: 19px; height: 19px; display: grid; place-items: center; border: 1px solid #888; border-radius: 2px; background: #fff; }
.close svg { width: 9px; height: 9px; }
.dialog-body { padding: 1px; border: 1px solid #555; background: #fff; }
.draw-bar, .offset-bar { padding-left: 5px; }
.grip { width: 2px; height: 14px; flex: none; margin-right: -3px; background: repeating-linear-gradient(#b5b5b5 0 2px, transparent 2px 4px); }
.modes { display: flex; gap: 9px; width: 181px; margin: 0 -1px 0 -2px; }
.modes label { display: flex; align-items: center; gap: 9px; white-space: nowrap; }
.modes input { appearance: none; width: 11px; height: 11px; border: 1px solid #999; border-radius: 50%; background: #fff; }
.modes input:checked { border-color: #777; background: radial-gradient(#000 0 2px, #fff 4px); }
.coord { display: flex; align-items: center; gap: 5px; font-family: "Open Sans", sans-serif; font-size: 13px; margin-right: 4px; }
.coord label { width: 22px; white-space: nowrap; }
.offset-bar .sep { margin-right: -5px; }
.spin { width: 78px; height: 23px; display: flex; align-items: center; border: 1px solid #777; background: #f8f8f8; }
.spin input { flex: 1; min-width: 0; text-align: right; color: #777; }
.arrows { display: flex; flex-direction: column; gap: 9px; padding: 0 4px 0 8px; }
.inc, .dec { border: 3px solid transparent; }
.inc { border-bottom-color: #666; border-top: 0; }
.dec { border-top-color: #666; border-bottom: 0; }
.canvas { background: #000; }
.canvas svg { display: block; }
.dim { stroke: #008000; fill: none; }
.tick { stroke: #008000; fill: none; }
.net { stroke: #c0c0c0; fill: none; }
.size { fill: #c0c0c0; font: 12px "Liberation Mono", monospace; }
.dynamic { height: 28px; padding-bottom: 2px; display: flex; background: #f0f0f0; border-bottom: 1px solid #a0a0a0; }
.dynamic button { width: 61px; background: #fafafa; }
.actions { height: 42px; display: flex; justify-content: flex-end; align-items: center; gap: 15px; padding: 0 13px 2px 0; background: #f0f0f0; }
.push { min-width: 72px; height: 23px; padding: 0 5px; border: 1px solid #707070; border-radius: 3px; background: linear-gradient(#f3f3f3 0 50%, #dedede 50%, #cfcfcf); box-shadow: inset 0 0 0 1px #fcfcfc; }
.from-cad { min-width: 105px; margin-right: 8px; }
.in-cad { margin-right: 10px; }
.main-action { border-color: #3c7fb1; background: linear-gradient(#e8f5fd 0 50%, #c3e5f9 50%, #afdcf6); box-shadow: inset 0 0 0 2px #5cd4fa; }
.status { display: flex; gap: 2px; background: #f0f0f0; }
.status > span { width: 148px; height: 20px; padding: 0 1px; line-height: 18px; border: 1px solid #d6d6d6; background: linear-gradient(#fefefe, #f0f0f0); }
.status > .hint { flex: 1; display: flex; justify-content: space-between; align-items: flex-end; }
.size-grip { width: 12px; height: 12px; }

/* Highlight boxes */
.mark { position: absolute; border: 3px solid #ff2418; border-radius: 3px; }
.mark-new { left: 150px; top: 6px; width: 54px; height: 110px; }
.mark-beam { left: 4px; top: 310px; width: 92px; height: 26px; }
.mark-grid { left: 405px; top: 126px; width: 125px; height: 67px; }
```
